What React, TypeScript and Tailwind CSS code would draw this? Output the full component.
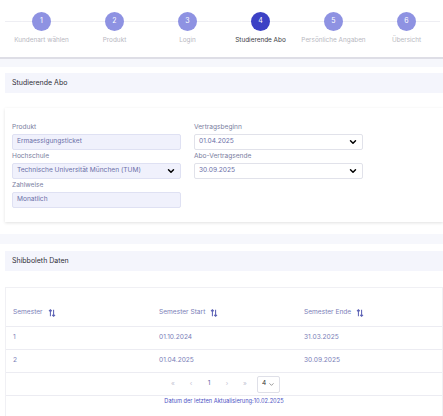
import { ChevronDown } from 'lucide-react';

const steps = [
  'Kundenart wählen',
  'Produkt',
  'Login',
  'Studierende Abo',
  'Persönliche Angaben',
  'Übersicht',
];

const ACTIVE_STEP = 3;

const rows = [
  { semester: '1', start: '01.10.2024', end: '31.03.2025' },
  { semester: '2', start: '01.04.2025', end: '30.09.2025' },
];

function Stepper() {
  return (
    <div className="relative h-[59px] border-b-2 border-[#dedee6] bg-white">
      {/* connector line behind the circles */}
      <div className="absolute left-[5px] right-[3px] top-[21px] h-px bg-[#eeeef3]" />
      <div className="relative ml-[5px] grid w-[438px] grid-cols-6">
        {steps.map((label, idx) => {
          const isActive = idx === ACTIVE_STEP;
          return (
            <div key={label} className="flex flex-col items-center pt-[12px]">
              <span
                className={`flex h-[19px] w-[19px] items-center justify-center rounded-full text-[7px] text-white ${
                  isActive ? 'bg-[#3c41c5]' : 'bg-[#8e92e2]'
                }`}
              >
                {idx + 1}
              </span>
              <span
                className={`mt-[4px] whitespace-nowrap text-[6.4px] leading-[10px] ${
                  isActive ? 'text-[#3a3a44]' : 'text-[#b8b8bf]'
                }`}
              >
                {label}
              </span>
            </div>
          );
        })}
      </div>
    </div>
  );
}

function SectionHeader({ title }: { title: string }) {
  return (
    <div className="ml-[5px] flex h-[20px] items-center bg-[#f4f5fc] px-[7px] text-[7px] text-[#2f2f38]">
      {title}
    </div>
  );
}

function Field({ label, value, select, readOnly }: { label: string; value: string; select?: boolean; readOnly?: boolean }) {
  return (
    <div>
      <div className="h-[13px] text-[6.6px] leading-[13px] text-[#7a7ea0]">{label}</div>
      <div
        className={`flex h-[16px] items-center justify-between rounded-[2px] border px-[4px] text-[6.6px] text-[#6c70a8] ${
          readOnly ? 'border-[#dfe1f3] bg-[#f0f1fc]' : 'border-[#e1e2ea] bg-white'
        }`}
      >
        <span>{value}</span>
        {select && <ChevronDown className="h-[10px] w-[10px] text-black" strokeWidth={3.5} />}
      </div>
    </div>
  );
}

function SortIcon() {
  return (
    <svg viewBox="0 0 10 10" className="ml-[5px] h-[8px] w-[8px]" fill="none" stroke="#5a60b4" strokeWidth="1.3">
      <path d="M3 9V1M1.2 2.8L3 1l1.8 1.8M7 1v8M5.2 7.2L7 9l1.8-1.8" />
    </svg>
  );
}

export default function App() {
  return (
    <div
      className="min-h-[416px] w-[443px] overflow-hidden bg-white"
      style={{ fontFamily: 'Inter, "Noto Sans", sans-serif' }}
    >
      <Stepper />
      <div className="h-[8px] bg-[#f6f7fc]" />

      <div className="pt-[6px]">
        <SectionHeader title="Studierende Abo" />
      </div>

      {/* Abo card */}
      <div className="ml-[5px] mt-[15px] grid grid-cols-[169px_169px] gap-x-[13px] bg-white px-[7px] pb-[14px] pt-[13px] shadow-[0_1px_3px_rgba(0,0,0,0.12)]">
        <div>
          <Field label="Produkt" value="Ermaessigungsticket" readOnly />
          <Field label="Hochschule" value="Technische Universität München (TUM)" select readOnly />
          <Field label="Zahlweise" value="Monatlich" readOnly />
        </div>
        <div>
          <Field label="Vertragsbeginn" value="01.04.2025" select />
          <Field label="Abo-Vertragsende" value="30.09.2025" select />
        </div>
      </div>

      <div className="mt-[12px] h-[10px] bg-[#f6f7fc]" />

      <div className="pt-[7px]">
        <SectionHeader title="Shibboleth Daten" />
      </div>

      {/* Shibboleth table card */}
      <div className="ml-[5px] mt-[16px] border border-[#f0f0f4] bg-white text-[6.6px] text-[#7b80b8]">
        <div className="grid h-[39px] grid-cols-[146px_145px_1fr] items-end border-b border-[#ececf2] px-[7px] pb-[8px]">
          <div className="flex items-center">Semester<SortIcon /></div>
          <div className="flex items-center">Semester Start<SortIcon /></div>
          <div className="flex items-center">Semester Ende<SortIcon /></div>
        </div>
        {rows.map((row) => (
          <div
            key={row.semester}
            className="grid h-[23px] grid-cols-[146px_145px_1fr] items-center border-b border-[#ececf2] px-[7px]"
          >
            <div>{row.semester}</div>
            <div>{row.start}</div>
            <div>{row.end}</div>
          </div>
        ))}
        <div className="flex h-[23px] items-center justify-center border-b border-[#ececf2] pr-[4px] text-[6.5px]">
          <span className="w-[18px] text-center text-[#c4c5d4]">«</span>
          <span className="w-[18px] text-center text-[#c4c5d4]">‹</span>
          <span className="w-[18px] text-center text-[#5f63a3]">1</span>
          <span className="w-[18px] text-center text-[#c4c5d4]">›</span>
          <span className="w-[18px] text-center text-[#c4c5d4]">»</span>
          <div className="ml-[3px] flex h-[17px] w-[23px] items-center justify-center gap-[2px] rounded-[2px] border border-[#dfe0e8] text-[#333]">
            4
            <ChevronDown className="h-[7px] w-[7px] text-[#555]" strokeWidth={2} />
          </div>
        </div>
        <div className="h-[20px] pt-[1px] text-center text-[5.7px] text-[#4d52c4]">
          Datum der letzten Aktualisierung:10.02.2025
        </div>
      </div>
    </div>
  );
}
